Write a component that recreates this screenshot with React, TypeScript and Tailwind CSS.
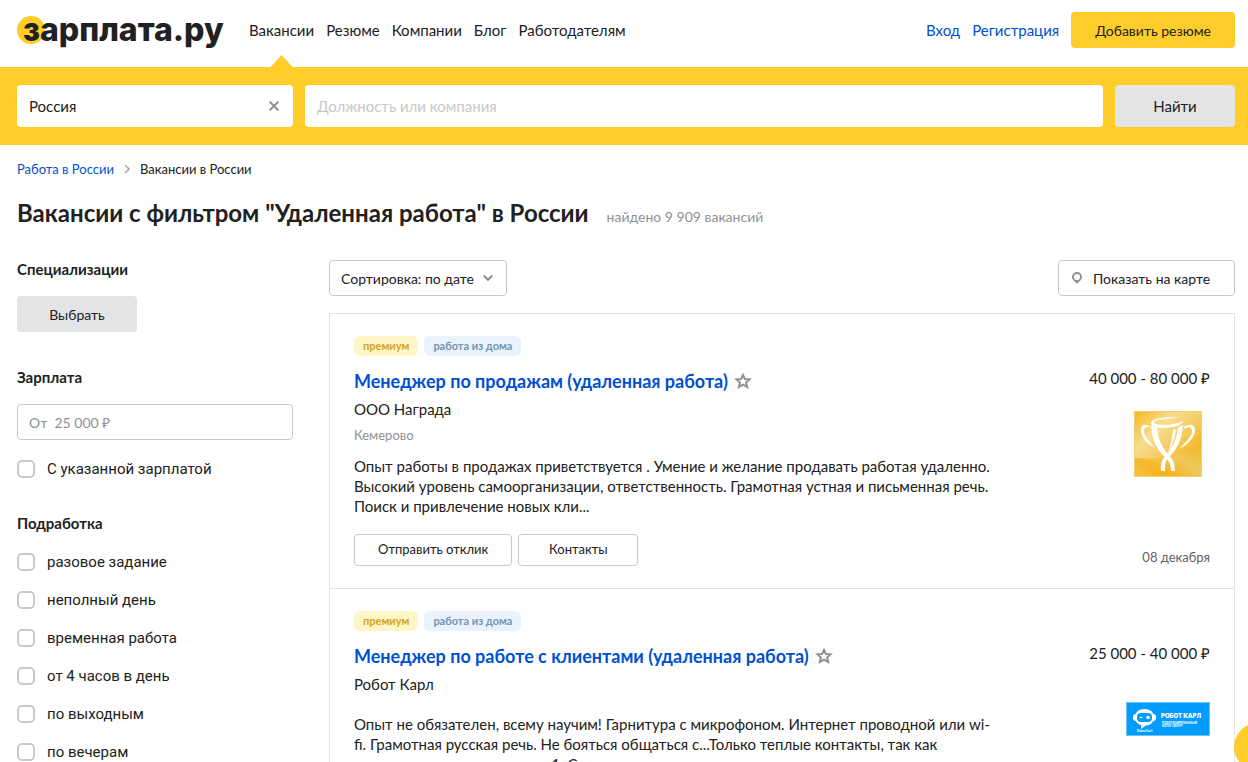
import React, { FC, ReactElement, ReactNode } from 'react';

const navItems = ['Вакансии', 'Резюме', 'Компании', 'Блог', 'Работодателям'];

const partTimeOptions = [
  'разовое задание',
  'неполный день',
  'временная работа',
  'от 4 часов в день',
  'по выходным',
  'по вечерам',
];

interface Vacancy {
  id: string;
  title: string;
  company: string;
  city: string;
  salary: string;
  date: string;
  description: string;
  logo: ReactNode;
}

const CupLogo: FC = (): ReactElement => (
  <svg className="w-17 h-[66px]" viewBox="0 0 68 66" role="img" aria-label="ООО Награда">
    <defs>
      <linearGradient id="cupGold" x1="0" y1="0" x2="1" y2="1">
        <stop offset="0" stopColor="#f8b51c" />
        <stop offset="0.3" stopColor="#f7dd8e" />
        <stop offset="0.5" stopColor="#f5cf6c" />
        <stop offset="0.75" stopColor="#f6b827" />
        <stop offset="1" stopColor="#f0cd70" />
      </linearGradient>
      <linearGradient id="cupShade" x1="0" y1="1" x2="1" y2="0">
        <stop offset="0" stopColor="#f6c23c" />
        <stop offset="0.28" stopColor="#f7ae10" />
        <stop offset="0.6" stopColor="#eccb68" />
        <stop offset="1" stopColor="#f5b320" />
      </linearGradient>
    </defs>
    <rect width="68" height="66" fill="url(#cupGold)" />
    <path d="M0 47 Q42 50 68 33 V66 H0 Z" fill="url(#cupShade)" opacity="0.75" />
    <rect x="0.5" y="0.5" width="67" height="65" fill="none" stroke="#f6cf70" />
    <g fill="#fff">
      <path d="M17 14 C18 29 23 39 31 46 C35 50 37 54 37 60 H41 C41 53 39 48 34 43 C27 35 24 27 23 16 C21 16 19 15 17 14 Z" />
      <path d="M49 14 C48 29 43 38 36 45 C31 49 31 54 31 60 H27 C26 53 28 48 33 43 C40 35 43 26 44 16 C46 16 47 15 49 14 Z" />
      <path d="M42 18 C41 28 38 36 34 42 C37 34 38 27 39 19 Z" />
      <path d="M17 13 C16 7 33 5 47 7 C37 7 22 8 20 11 C20 15 39 15 49 10 C48 15 38 17 29 17 C22 17 18 15 17 13 Z" />
      <path d="M17 16 C12 12 6 13 7 20 C8 28 15 34 21 37 C15 30 10 25 10 20 C10 16 13 15 17 16 Z" />
      <path d="M50 16 C55 12 62 13 61 20 C60 28 52 35 46 37 C53 30 58 25 58 20 C58 16 55 15 50 18 Z" />
    </g>
  </svg>
);

const RobotLogo: FC = (): ReactElement => (
  <svg className="w-21 h-[34px]" viewBox="0 0 84 34" role="img" aria-label="Робот Карл">
    <rect width="84" height="34" fill="#009dff" />
    <rect x="0.5" y="0.5" width="83" height="33" fill="none" stroke="#6cc3fb" />
    <rect x="7" y="12" width="23" height="7" rx="3" fill="#fff" />
    <path d="M18.500 7 C25 7 28 11 28 15.500 C28 20 25 23 20 23.500 L15 27 V23 C11 22 9 19 9 15.500 C9 11 12 7 18.500 7 Z" fill="#fff" />
    <rect x="11" y="11" width="15" height="9" rx="4" fill="#009dff" />
    <path d="M13.500 15.500 H16.500" stroke="#fff" strokeWidth="1.200" />
    <circle cx="22" cy="15.500" r="1.800" fill="#fff" />
    <text x="35" y="16" fontSize="6" fontWeight="900" fill="#fff" fontFamily="Inter, sans-serif">РОБОТ КАРЛ</text>
    <text x="36" y="22" fontSize="3" fontWeight="700" fill="#fff" fontFamily="Inter, sans-serif">РОБОТИЗИРОВАННЫЙ</text>
    <text x="36" y="25" fontSize="3" fontWeight="700" fill="#fff" fontFamily="Inter, sans-serif">КОЛЛ-ЦЕНТР</text>
    <text x="11" y="30" fontSize="3" fontWeight="700" fill="#fff" fontFamily="Inter, sans-serif">Robot Karl</text>
  </svg>
);

const vacancies: Vacancy[] = [
  {
    id: 'sales',
    title: 'Менеджер по продажам (удаленная работа)',
    company: 'ООО Награда',
    city: 'Кемерово',
    salary: '40 000 - 80 000 ₽',
    date: '08 декабря',
    description:
      'Опыт работы в продажах приветствуется . Умение и желание продавать работая удаленно. Высокий уровень самоорганизации, ответственность. Грамотная устная и письменная речь. Поиск и привлечение новых кли...',
    logo: <CupLogo />,
  },
  {
    id: 'clients',
    title: 'Менеджер по работе с клиентами (удаленная работа)',
    company: 'Робот Карл',
    city: '',
    salary: '25 000 - 40 000 ₽',
    date: '08 декабря',
    description:
      'Опыт не обязателен, всему научим! Гарнитура с микрофоном. Интернет проводной или wi-fi. Грамотная русская речь. Не бояться общаться с...Только теплые контакты, так как сначала они остаются у нас. 1. Своя...',
    logo: <RobotLogo />,
  },
];

const Header: FC = (): ReactElement => (
  <header className="flex items-center pl-[17px] pr-[13px] pt-3 pb-[19px]">
    <a href="#" className="relative shrink-0 w-[204px] mr-7 pl-1.5">
      <span className="absolute left-0 top-[3px] size-7 rounded-full bg-[#ffcd29]" />
      <span className="relative block font-['Inter',sans-serif] text-[32px] leading-[34px] font-extrabold">
        зарплата.ру
      </span>
    </a>
    <nav className="flex gap-3">
      {navItems.map((item, index) => (
        <a key={item} href="#" className="relative flex items-center h-9">
          {item}
          {index === 0 && (
            <span className="absolute left-1/2 -translate-x-1/2 -bottom-[19px] w-[22px] h-3 bg-[#ffcd29] [clip-path:polygon(50%_0,100%_100%,0_100%)]" />
          )}
        </a>
      ))}
    </nav>
    <div className="flex items-center gap-3 ml-auto text-[#0050d2]">
      <a href="#">Вход</a>
      <a href="#">Регистрация</a>
      <button type="button" className="h-9 px-6 rounded bg-[#ffcd29] text-[14px] text-[#212121]">
        Добавить резюме
      </button>
    </div>
  </header>
);

const SearchBar: FC = (): ReactElement => (
  <form className="flex gap-3 pl-[17px] pr-[13px] py-[18px] bg-[#ffcd29]">
    <div className="flex items-center w-[276px] h-[42px] px-3 rounded bg-white">
      <input type="text" aria-label="Регион" defaultValue="Россия" className="flex-1 min-w-0 outline-none" />
      <button type="button" aria-label="Очистить" className="p-0.5">
        <svg className="size-2.5" viewBox="0 0 10 10" stroke="#8f9193" strokeWidth={2}>
          <path d="M0.700 0.700 L9.300 9.300 M9.300 0.700 L0.700 9.300" />
        </svg>
      </button>
    </div>
    <input
      type="text"
      aria-label="Должность или компания"
      placeholder="Должность или компания"
      className="flex-1 min-w-0 h-[42px] px-3 rounded bg-white outline-none placeholder:text-[#c8c9cb]"
    />
    <button type="submit" className="w-30 h-[42px] rounded bg-[#e3e4e6]">
      Найти
    </button>
  </form>
);

const Checkbox: FC<{ label: string }> = ({ label }): ReactElement => (
  <label className="flex items-center gap-3 h-[18px] font-['Roboto',sans-serif]">
    <input
      type="checkbox"
      className="appearance-none size-[18px] shrink-0 rounded-[5px] border-2 border-[#c8c9cb] bg-white"
    />
    {label}
  </label>
);

const Filters: FC = (): ReactElement => (
  <aside className="w-[276px] shrink-0">
    <h3 className="font-bold leading-[18px]">Специализации</h3>
    <button type="button" className="block w-30 h-9 mt-[18px] rounded bg-[#e3e4e6] text-[14px]">
      Выбрать
    </button>

    <h3 className="mt-9 font-bold leading-[18px]">Зарплата</h3>
    <input
      type="text"
      aria-label="Зарплата от"
      placeholder={'От\u00a0 25 000 ₽'}
      className="block w-full h-9 mt-[18px] mb-5 px-[11px] rounded border border-[#c8c9cb] text-[14px] outline-none placeholder:text-[#8f9193]"
    />
    <Checkbox label="С указанной зарплатой" />

    <h3 className="mt-9 mb-5 font-bold leading-[18px]">Подработка</h3>
    <div className="flex flex-col gap-5 pt-px">
      {partTimeOptions.map((option) => (
        <Checkbox key={option} label={option} />
      ))}
    </div>
  </aside>
);

const VacancyCard: FC<{ vacancy: Vacancy }> = ({ vacancy }): ReactElement => (
  <article className="flex justify-between px-6 pt-[22px] pb-[22px] border border-t-0 border-[#e3e4e6]">
    <div className="w-[640px]">
      <div className="flex gap-1.5 text-[11px] leading-5 font-bold">
        <span className="px-[9px] rounded-md bg-[#fff6c8] text-[#d0a520]">премиум</span>
        <span className="px-[9px] rounded-md bg-[#eaf3fb] text-[#7195b2]">работа из дома</span>
      </div>
      <div className="flex items-center gap-1.5 mt-[13px] h-6">
        <h2 className="text-[18px] leading-6 font-bold">
          <a href="#" className="text-[#0050d2]">
            {vacancy.title}
          </a>
        </h2>
        <button type="button" aria-label="В избранное">
          <svg className="size-[18px]" viewBox="0 0 18 18" fill="none" stroke="#8f9193" strokeWidth={2}>
            <path d="M9 3 L10.900 7 L15.500 7.400 L12.100 10.500 L13.200 15 L9 12.700 L4.800 15 L5.900 10.500 L2.500 7.400 L7.100 7 Z" />
          </svg>
        </button>
      </div>
      <a href="#" className="block mt-1.5 leading-5">
        {vacancy.company}
      </a>
      {vacancy.city && <div className="mt-1.5 text-[13px] leading-5 text-[#8f9193]">{vacancy.city}</div>}
      <p className={vacancy.city ? 'mt-[11px] leading-5' : 'mt-5 leading-5'}>{vacancy.description}</p>
      <div className="flex gap-1.5 mt-[18px] text-[13px]">
        <button type="button" className="h-8 px-[23px] rounded-sm border border-[#c8c9cb]">
          Отправить отклик
        </button>
        <button type="button" className="w-30 h-8 rounded-sm border border-[#c8c9cb]">
          Контакты
        </button>
      </div>
    </div>
    <div className="flex flex-col items-end pt-8">
      <div className="leading-5">{vacancy.salary}</div>
      <div className="flex items-center justify-center w-21 h-[88px] mt-3">{vacancy.logo}</div>
      <div className="mt-auto text-[13px] leading-[18px] text-[#5f6163]">{vacancy.date}</div>
    </div>
  </article>
);

const App: FC = (): ReactElement => (
  <div className="h-screen overflow-hidden bg-white font-['Lato',sans-serif] text-[15px] text-[#212121]">
    <Header />
    <SearchBar />
    <div className="pl-[17px] pr-[13px]">
      <nav className="flex items-center gap-2.5 pt-[14px] text-[13px] leading-5">
        <a href="#" className="text-[#0050d2]">
          Работа в России
        </a>
        <svg className="w-1.5 h-2.5" viewBox="0 0 6 10" fill="none" stroke="#a9abad" strokeWidth={1.6}>
          <path d="M1 1 L5 5 L1 9" />
        </svg>
        <span>Вакансии в России</span>
      </nav>
      <div className="flex items-baseline gap-[18px] mt-[18px]">
        <h1 className="text-[24px] leading-8 font-bold">Вакансии с фильтром "Удаленная работа" в России</h1>
        <span className="text-[14px] text-[#8f9193]">найдено 9 909 вакансий</span>
      </div>
      <div className="flex gap-9 mt-[31px]">
        <Filters />
        <main className="flex-1 min-w-0">
          <div className="flex justify-between text-[14px]">
            <div className="relative">
              <select
                aria-label="Сортировка"
                className="appearance-none h-9 w-[178px] pl-[11px] pr-6 rounded border border-[#c8c9cb] bg-white"
              >
                <option>Сортировка: по дате</option>
                <option>Сортировка: по зарплате</option>
              </select>
              <svg
                className="absolute right-3.5 top-3.5 w-2.5 h-2 pointer-events-none"
                viewBox="0 0 10 8"
                fill="none"
                stroke="#8f9193"
                strokeWidth={2}
              >
                <path d="M0.700 1.500 L5 5.800 L9.300 1.500" />
              </svg>
            </div>
            <button type="button" className="flex items-center gap-2.5 w-[177px] h-9 pl-3 rounded border border-[#c8c9cb]">
              <svg className="w-3 h-3" viewBox="0 0 12 12">
                <path
                  fill="#8f9193"
                  fillRule="evenodd"
                  d="M6 0 A5 5 0 0 1 11 5 C11 8 8 9.500 6 12 C4 9.500 1 8 1 5 A5 5 0 0 1 6 0 Z M6 1.900 A3.100 3.100 0 1 0 6 8.100 A3.100 3.100 0 1 0 6 1.900 Z"
                />
              </svg>
              Показать на карте
            </button>
          </div>
          <div className="mt-[17px] border-t border-[#e3e4e6]">
            {vacancies.map((vacancy) => (
              <VacancyCard key={vacancy.id} vacancy={vacancy} />
            ))}
          </div>
        </main>
      </div>
    </div>
    {/* chat bubble, mostly tucked behind the window corner */}
    <button
      type="button"
      aria-label="Чат поддержки"
      className="fixed -right-[34px] -bottom-[9px] size-12 rounded-full bg-[#ffcd29]"
    />
  </div>
);

export default App;
